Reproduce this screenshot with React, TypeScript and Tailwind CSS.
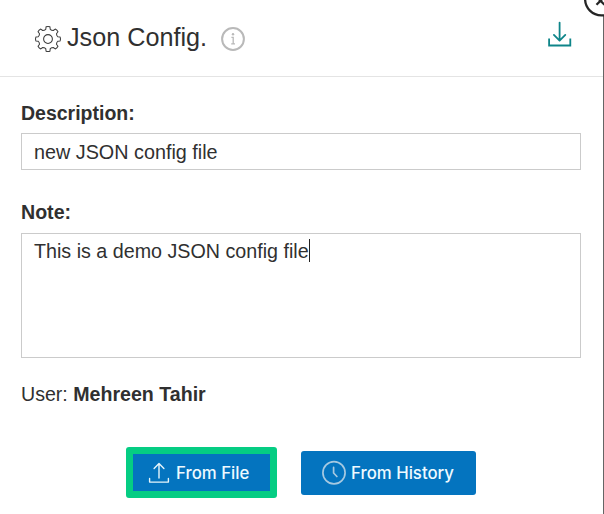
import React from "react";

const sans = "font-['Liberation_Sans',Arial,sans-serif]";

// Outline of an eight-toothed cog centred on the origin
const cogPath = (() => {
  const pt = (r: number, deg: number) => {
    const a = (deg * Math.PI) / 180;
    return `${(r * Math.cos(a)).toFixed(2)} ${(r * Math.sin(a)).toFixed(2)}`;
  };
  let d = "";
  for (let i = 0; i < 8; i++) {
    const c = i * 45;
    d += `${i === 0 ? "M" : "L"}${pt(10, c - 13)}L${pt(12.3, c - 9)}Q${pt(12.9, c)} ${pt(12.3, c + 9)}L${pt(10, c + 13)}Q${pt(9.2, c + 22.5)} ${pt(10, c + 32)}`;
  }
  return d + "Z";
})();

function CogIcon() {
  return (
    <svg className="block h-[28px] w-[28px]" viewBox="-14 -14 28 28" fill="none" stroke="#3d3d3d" strokeWidth="1.05" strokeLinejoin="round">
      <path d={cogPath} />
      <circle r="4.4" />
    </svg>
  );
}

function InfoIcon() {
  return (
    <svg className="block h-[26px] w-[26px]" viewBox="0 0 26 26" fill="none" stroke="#b9b9b9">
      <circle cx="13" cy="13" r="10.9" strokeWidth="2" />
      <path d="M11.4 11.4h1.8v6.4M11.2 17.9h3.8" strokeWidth="1.3" />
      <circle cx="13" cy="8.3" r="1.2" fill="#b9b9b9" stroke="none" />
    </svg>
  );
}

function DownloadIcon() {
  return (
    <svg className="block h-[26px] w-[26px]" viewBox="0 0 26 26" fill="none" stroke="#0e8589" strokeWidth="1.8" strokeLinecap="round" strokeLinejoin="round">
      <path d="M12.6 1.6v18M6.9 13.9l5.7 5.8 5.7-5.8" />
      <path d="M2.1 17.4v7.1h21.2v-7.1" strokeLinecap="butt" strokeLinejoin="miter" />
    </svg>
  );
}

function UploadIcon() {
  return (
    <svg className="block h-[22px] w-[22px]" viewBox="0 0 22 22" fill="none" stroke="#e6f5fb" strokeWidth="1.4" strokeLinecap="round" strokeLinejoin="round">
      <path d="M11 16V1.6M6.1 6.4L11 1.5l4.9 4.9" />
      <path d="M1.6 16.4v3.7h18.8v-3.7" />
    </svg>
  );
}

function ClockIcon() {
  return (
    <svg className="block h-[26px] w-[26px]" viewBox="0 0 26 26" fill="none" stroke="#a6c9e1" strokeWidth="1.7" strokeLinecap="round">
      <circle cx="13" cy="12.7" r="11.1" />
      <path d="M12.6 7.4V13l3.3 3.5" strokeWidth="1.7" />
    </svg>
  );
}

export default function App() {
  return (
    <div className={`relative h-[514px] w-[604px] overflow-hidden bg-white text-[#303030] ${sans}`}>
      <div className="h-full w-[603px] bg-white">
        <header className="flex h-[77px] items-start border-b border-[#e4e4e4] pl-[34px]">
          <div className="mt-[25px]"><CogIcon /></div>
          <h1 className="mt-[22px] ml-[5px] w-[154px] whitespace-nowrap text-[25.2px] leading-[30px]">Json Config.</h1>
          <div className="mt-[26px] -ml-px"><InfoIcon /></div>
          <div className="mt-[21px] mr-[30px] ml-auto"><DownloadIcon /></div>
        </header>

        <main className="pt-[24px] pr-[22px] pl-[21px]">
          <label className="block text-[19.5px] leading-[24px] font-bold">Description:</label>
          <div className="mt-[8px] flex h-[37px] items-center border border-[#cbcbcb] pl-[12px] text-[19.8px] leading-[24px]">
            new JSON config file
          </div>

          <label className="mt-[30px] block text-[19.6px] leading-[24px] font-bold">Note:</label>
          <div className="mt-[9px] flex h-[125px] items-start border border-[#cbcbcb] pt-[5px] pl-[12px] text-[19.7px] leading-[24px]">
            <span>This is a demo JSON config file</span>
            <span className="h-[23px] w-px bg-[#222]" />
          </div>

          <p className="mt-[24px] text-[19.6px] leading-[24px]">
            User: <strong>Mehreen Tahir</strong>
          </p>
        </main>

        <div className="mt-[41px] flex items-center pl-[126px] font-['Inter',sans-serif] text-[16.8px] leading-[22px] font-medium text-[#eefaff]">
          <button className="flex h-[51px] w-[151px] items-center rounded-[3px] border-[7px] border-[#05cd83] bg-[#0474bf] pl-[15px] whitespace-nowrap">
            <UploadIcon />
            <span className="ml-[6px]">From File</span>
          </button>
          <button className="ml-[24px] flex h-[44px] w-[175px] items-center rounded-[3px] bg-[#0474bf] pl-[20px] whitespace-nowrap">
            <ClockIcon />
            <span className="ml-[4px]">From History</span>
          </button>
        </div>
      </div>

      <div className="absolute top-[14px] right-0 bottom-0 w-px bg-[#656565]" />
      <svg className="absolute top-0 right-0 h-[18px] w-[22px]" viewBox="582 0 22 18" fill="none">
        <circle cx="601.5" cy="-1" r="16.4" fill="#fff" stroke="#252525" strokeWidth="2.3" />
        <path d="M596.5 4.8l8-8M596.5 -3.2l8 8" stroke="#252525" strokeWidth="2.3" />
      </svg>
    </div>
  );
}
